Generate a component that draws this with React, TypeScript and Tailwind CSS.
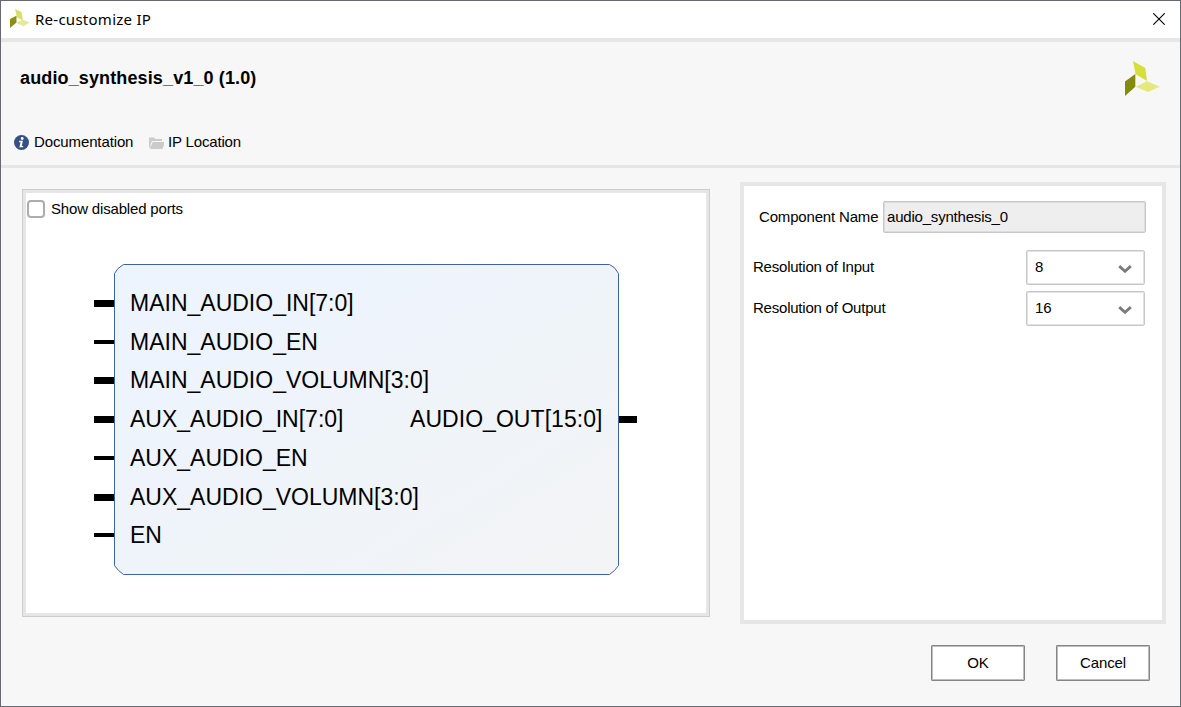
import React from "react";

type Port = { name: string; bus: boolean };

const inputs: Port[] = [
  { name: "MAIN_AUDIO_IN[7:0]", bus: true },
  { name: "MAIN_AUDIO_EN", bus: false },
  { name: "MAIN_AUDIO_VOLUMN[3:0]", bus: true },
  { name: "AUX_AUDIO_IN[7:0]", bus: true },
  { name: "AUX_AUDIO_EN", bus: false },
  { name: "AUX_AUDIO_VOLUMN[3:0]", bus: true },
  { name: "EN", bus: false },
];

function Logo() {
  return (
    <svg className="h-[35px] w-[35px]" viewBox="0 0 35 35" aria-hidden="true">
      <path d="M8 0 L20.3 7 L22 20 L10.6 13.3 Z" fill="#d5df3a" />
      <path d="M0 20.5 L10.3 13 V25.7 L0 35 Z" fill="#848a0c" />
      <path d="M10.7 25.7 L22 20.2 L34.8 25.7 L23 31 Z" fill="#e4e97c" />
    </svg>
  );
}

function SmallLogo() {
  return (
    <svg className="h-5 w-5" viewBox="0 0 20 20" aria-hidden="true">
      <path d="M5 0 L11.5 3 L13 11.5 L7 8.5 Z" fill="#d9df68" />
      <path d="M0 10 L6.5 6.8 V13.5 L0 19 Z" fill="#8b9018" />
      <path d="M6 13.8 L12.5 10.5 L19.8 13.6 L13.5 17.2 Z" fill="#e6e99b" />
    </svg>
  );
}

function TitleBar() {
  return (
    <div className="flex h-[41px] shrink-0 items-start justify-between border-b-[4px] border-[#e6e6e6] bg-white pl-[9px] pr-[15px]">
      <div className="flex items-start pt-2">
        <SmallLogo />
        <span className="ml-[5px] font-['Noto_Sans','Open_Sans',sans-serif] text-[15px] leading-[21px] tracking-[0.26px]">
          Re-customize IP
        </span>
      </div>
      <svg className="mt-3 h-3 w-3" viewBox="0 0 12 12" stroke="#000" strokeWidth="1.1" aria-hidden="true">
        <path d="M0.3 0.3 L11.7 11.7 M11.7 0.3 L0.3 11.7" />
      </svg>
    </div>
  );
}

function Header() {
  return (
    <div className="flex h-[126px] shrink-0 flex-col border-b-[3px] border-[#e6e6e6]">
      <div className="flex h-[84px] justify-between pl-[19px] pr-5 pt-[19px]">
        <h1 className="pt-[7px] text-[18px] font-bold leading-5 tracking-[0.13px]">audio_synthesis_v1_0 (1.0)</h1>
        <Logo />
      </div>
      <div className="flex h-8 items-center pl-[13px]">
        <svg className="h-[15px] w-[15px]" viewBox="0 0 15 15" aria-hidden="true">
          <circle cx="7.5" cy="7.5" r="7.5" fill="#364f84" />
          <circle cx="8.2" cy="3.5" r="1.4" fill="#fff" />
          <path d="M5.2 5.8 H8.9 L7.8 11 H9.3 L9 12.3 H5.4 L6.6 7.2 H5 Z" fill="#fff" />
        </svg>
        <span className="ml-[5px] w-[115px] tracking-[-0.12px]">Documentation</span>
        <svg className="mt-[1px] h-3 w-[15px]" viewBox="0 0 15 12" fill="#cbcbcb" aria-hidden="true">
          <path d="M0 0.5 H5 L6.4 2 H13 V4 H3 L1.5 7.5 V10.5 H0 Z" />
          <path d="M3.7 5 H15 V8 L13.5 12 H0.9 Z" />
        </svg>
        <span className="ml-1 tracking-[-0.17px]">IP Location</span>
      </div>
    </div>
  );
}

function PortRow({ port }: { port: Port }) {
  return (
    <div className="flex h-[38.78px] items-center">
      <span className={port.bus ? "mt-[1px] h-[7px] w-5 shrink-0 bg-black" : "h-1 w-5 shrink-0 bg-black"} />
      <span className="ml-4 whitespace-nowrap text-[23px] leading-7">{port.name}</span>
    </div>
  );
}

function BlockDiagram() {
  return (
    <div className="mt-[46px] grid pl-[68px]">
      <svg className="col-start-1 row-start-1 ml-5 h-[311px] w-[505px]" viewBox="0 0 505 311" aria-hidden="true">
        <defs>
          <linearGradient id="blockFill" x1="0" y1="0" x2="1" y2="1">
            <stop offset="0" stopColor="#ecf4fd" />
            <stop offset="0.4" stopColor="#eff4fc" />
            <stop offset="0.6" stopColor="#eff4f8" />
            <stop offset="1" stopColor="#f4f4f6" />
          </linearGradient>
        </defs>
        <path
          d="M9.5 0.5 H495.5 Q501 2.5 504.5 9.5 V301.5 Q501 307 495.5 310.5 H9.5 Q4 307 0.5 301.5 V9.5 Q3 4 9.5 0.5 Z"
          fill="url(#blockFill)"
          stroke="#3f62a5"
        />
      </svg>
      <div className="col-start-1 row-start-1 flex items-center pb-[0.9px]">
        <div className="w-[316px] shrink-0">
          {inputs.map((port) => (
            <PortRow key={port.name} port={port} />
          ))}
        </div>
        <div className="flex items-center">
          <span className="w-[209px] text-[23px] leading-7 tracking-[0.05px]">AUDIO_OUT[15:0]</span>
          <span className="mt-[1px] h-[7px] w-[18px] bg-black" />
        </div>
      </div>
    </div>
  );
}

function PreviewPanel() {
  return (
    <section className="mt-[21px] h-[428px] w-[688px] border border-[#cdcdcd]">
      <div className="h-full border-[3px] border-[#e6e6e6] bg-white">
        <label className="flex h-[25px] items-end">
          <span className="ml-[1px] h-[18px] w-[18px] rounded-[4px] border-2 border-[#adadad] bg-white" />
          <span className="ml-[6px] leading-[18px] tracking-[-0.17px]">Show disabled ports</span>
        </label>
        <BlockDiagram />
      </div>
    </section>
  );
}

function SelectRow({ label, value }: { label: string; value: string }) {
  return (
    <div className="flex h-[35px] items-center justify-between pl-[9px] pr-[17px]">
      <span className="pb-[2px] tracking-[-0.22px]">{label}</span>
      <div className="flex h-[35px] w-[119px] items-center justify-between rounded-[2px] border border-[#c8c8c8] bg-white pl-2 pr-3 shadow-[inset_0_0_0_1px_#e2e2e2]">
        <span className="pb-[2px]">{value}</span>
        <svg className="mt-[2px] h-2 w-[14px]" viewBox="0 0 14 8" fill="none" stroke="#7b7b7b" strokeWidth="2.8" aria-hidden="true">
          <path d="M1.2 1.1 L7 6.3 L12.8 1.1" />
        </svg>
      </div>
    </div>
  );
}

function SettingsPanel() {
  return (
    <section className="mt-[14px] h-[442px] w-[426px] border-4 border-[#e6e6e6] bg-white">
      <div className="mt-[15px] flex h-8 items-center pl-[15px]">
        <span className="w-[124px] tracking-[-0.17px]">Component Name</span>
        <div className="flex h-8 w-[263px] items-center rounded-[2px] border border-[#c8c8c8] bg-[#eee] pl-[3px] tracking-[-0.2px] shadow-[inset_0_0_0_1px_#dcdcdc]">
          audio_synthesis_0
        </div>
      </div>
      <div className="mt-[17px] flex flex-col gap-[6px]">
        <SelectRow label="Resolution of Input" value="8" />
        <SelectRow label="Resolution of Output" value="16" />
      </div>
    </section>
  );
}

function DialogButton({ children }: { children: React.ReactNode }) {
  return (
    <button className="h-9 w-[94px] rounded-[1px] border border-[#858585] bg-white tracking-[-0.1px] shadow-[inset_0_0_0_1px_#bdbdbd]">
      {children}
    </button>
  );
}

export default function App() {
  return (
    <div className="flex h-[707px] w-[1181px] flex-col border border-[#676970] bg-[#f7f7f7] font-['Liberation_Sans',Arial,sans-serif] text-[15px] leading-[18px] text-black">
      <TitleBar />
      <Header />
      <main className="flex h-[456px] shrink-0 items-start justify-between pl-[21px] pr-[14px]">
        <PreviewPanel />
        <SettingsPanel />
      </main>
      <footer className="flex justify-end gap-[31px] pr-[30px] pt-[21px]">
        <DialogButton>OK</DialogButton>
        <DialogButton>Cancel</DialogButton>
      </footer>
    </div>
  );
}
